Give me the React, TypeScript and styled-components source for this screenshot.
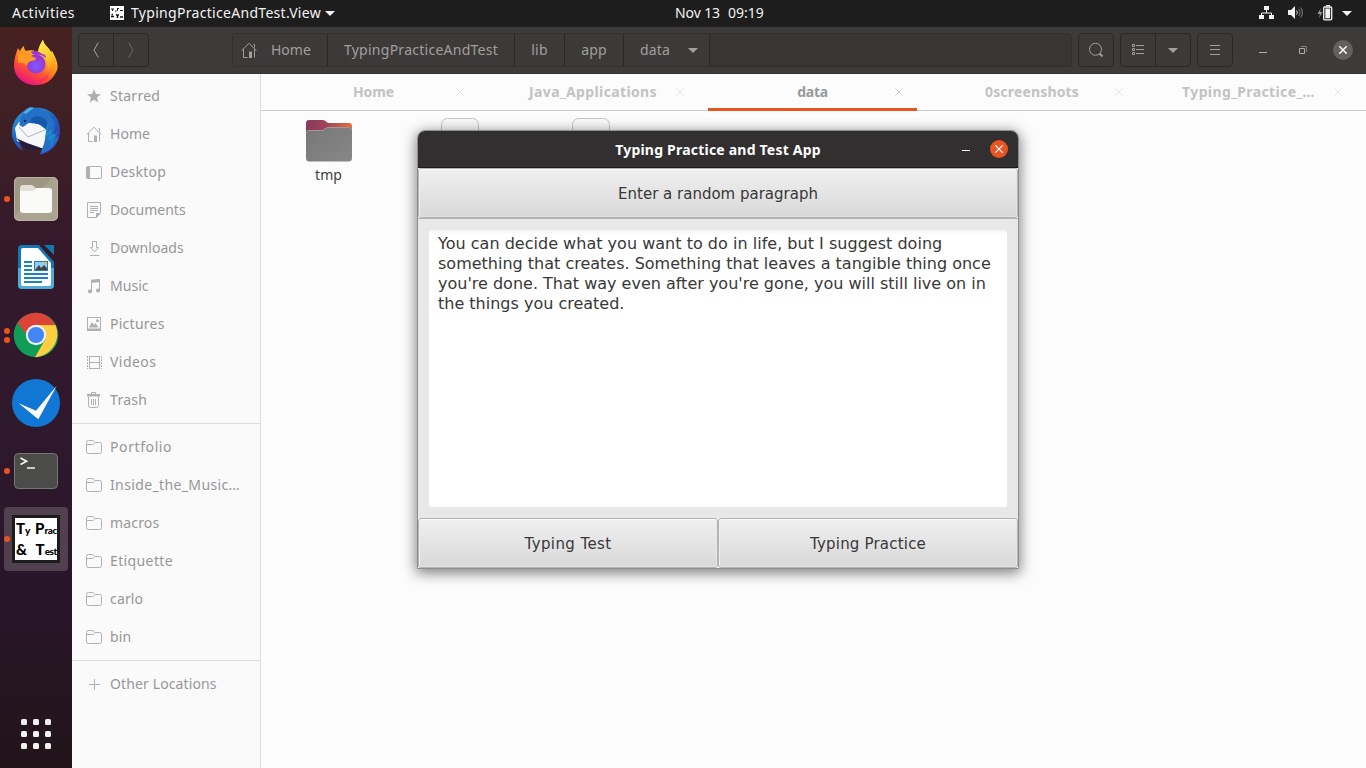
import React from 'react';
import styled, { createGlobalStyle, css } from 'styled-components';

const Global = createGlobalStyle`
  * { box-sizing: border-box; }
  html, body { margin: 0; padding: 0; overflow: hidden; }
  body { font-family: "Noto Sans", "Open Sans", sans-serif; font-size: 14px; line-height: 20px; }
  svg { display: block; flex: none; }
`;

/* ---------- desktop ---------- */

const Desktop = styled.div`
  position: relative;
  display: grid;
  grid-template: 27px 741px / 72px 1fr;
  width: 1366px;
  height: 768px;
  overflow: hidden;
`;

const Label = styled.span<{ $track?: number }>`
  letter-spacing: ${p => p.$track ?? 0}px;
  white-space: pre;
`;

/* ---------- top panel ---------- */

const TopPanel = styled.header`
  grid-column: 1 / 3;
  display: grid;
  grid-template-columns: 663px auto 1fr;
  align-items: center;
  padding: 0 14px 1px 12px;
  background: #1d1d1d;
  color: #f2f2f2;
`;

const PanelLeft = styled.div`
  display: flex;
  align-items: center;
`;

const AppMenu = styled.div`
  display: flex;
  align-items: center;
  margin-left: 35px;
  gap: 7px;

  svg:last-child { margin-left: -3px; }
`;

const Clock = styled.div`
  display: flex;
  gap: 8px;
`;

const PanelRight = styled.div`
  display: flex;
  align-items: center;
  justify-content: flex-end;
  gap: 13px;

  svg:last-child { margin-left: -4px; }
`;

/* ---------- dock ---------- */

const Dock = styled.nav`
  display: flex;
  flex-direction: column;
  gap: 4px;
  padding: 4px 4px 0;
  background: linear-gradient(#472120 0, #3d1f26 110px, #35192b 220px, #2e182c 400px, #29152a 560px, #211419 741px);
`;

const DockItem = styled.div<{ $active?: boolean; $lift?: number }>`
  position: relative;
  display: flex;
  align-items: center;
  justify-content: center;
  height: 64px;
  padding-bottom: ${p => p.$lift ?? 0}px;
  border-radius: 4px;
  background: ${p => (p.$active ? '#51404e' : 'transparent')};
`;

const RunningDots = styled.div`
  position: absolute;
  left: 0;
  top: 0;
  bottom: 0;
  display: flex;
  flex-direction: column;
  justify-content: center;
  gap: 3px;

  i {
    width: 6px;
    height: 6px;
    border-radius: 50%;
    background: #e95420;
  }
`;

const TypingTile = styled.div`
  display: flex;
  flex-direction: column;
  width: 48px;
  height: 48px;
  padding: 0 0 0 1px;
  border: 3px solid #1c1c1c;
  background: #fff;
  color: #000;
  font: 700 15px/21px Lato, sans-serif;

  span { display: flex; align-items: baseline; justify-content: space-between; height: 21px; white-space: pre; }
  small { font-size: 10px; line-height: 10px; letter-spacing: -0.4px; }
`;

const AppGrid = styled.div`
  display: grid;
  grid-template-columns: repeat(3, 6px);
  gap: 6px;
  margin: auto auto 19px;

  i {
    height: 6px;
    border-radius: 1.5px;
    background: #f0f0ee;
  }
`;

/* ---------- file manager ---------- */

const Files = styled.main`
  display: grid;
  grid-template: 47px 1fr / 189px 1fr;
  min-width: 0;
`;

const HeaderBar = styled.div`
  grid-column: 1 / 3;
  display: flex;
  align-items: center;
  padding: 0 13px 0 6px;
  background: #3d3b39;
  border-bottom: 1px solid #363432;
  color: #a09f9d;
`;

const buttonFrame = css`
  height: 34px;
  border: 1px solid #292826;
  border-radius: 4px;
  background: #3c3a38;
`;

const ButtonGroup = styled.div<{ $gap?: number }>`
  ${buttonFrame}
  display: flex;
  margin-left: ${p => p.$gap ?? 0}px;
`;

const HeaderButton = styled.button`
  display: flex;
  align-items: center;
  justify-content: center;
  width: 34px;
  padding: 0;
  border: 0;
  background: none;
  color: inherit;

  & + & {
    width: 35px;
    border-left: 1px solid #292826;
  }
`;

const PathBar = styled.div`
  ${buttonFrame}
  display: flex;
  width: 840px;
  margin: 0 0 0 83px;
  background: #383633;
  border-color: #32302e;
`;

const PathSegment = styled.div<{ $w: number }>`
  display: flex;
  align-items: center;
  justify-content: center;
  width: ${p => p.$w}px;
  border-right: 1px solid #292826;
  background: #3c3a38;
`;

const HomeSegment = styled(PathSegment)`
  justify-content: flex-start;
  padding-left: 8px;
  gap: 14px;
`;

const DataSegment = styled(PathSegment)`
  justify-content: flex-start;
  padding-left: 16px;
  gap: 18px;
`;

const WindowControls = styled.div`
  display: flex;
  align-items: center;
  margin-left: auto;
`;

const RoundClose = styled.div`
  display: flex;
  align-items: center;
  justify-content: center;
  width: 20px;
  height: 20px;
  margin-left: 26px;
  border-radius: 50%;
  background: #626160;
  color: #fff;
`;

const Sidebar = styled.aside`
  padding-top: 3px;
  background: #fafafa;
  border-right: 1px solid #dcdcdc;
  color: #979797;
`;

const Place = styled.div`
  display: flex;
  align-items: center;
  gap: 8px;
  height: 38px;
  padding-left: 14px;

  svg { color: #b0b0b0; }
`;

const Divider = styled.div`
  height: 1px;
  margin: 4px 0;
  background: #dcdcdc;
`;

const Content = styled.section`
  display: flex;
  flex-direction: column;
  min-width: 0;
  background: #fcfcfc;
`;

const TabStrip = styled.div`
  display: grid;
  grid-template-columns: repeat(5, 209px);
  column-gap: 10.5px;
  height: 37px;
  padding-left: 8px;
  border-bottom: 1px solid #cdcdcd;
`;

const Tab = styled.div<{ $active?: boolean }>`
  display: grid;
  grid-template-columns: 26px 1fr 26px;
  align-items: center;
  height: 37px;
  border-bottom: 3px solid ${p => (p.$active ? '#e95420' : 'transparent')};
  color: ${p => (p.$active ? '#999' : '#c2c2c2')};
  font-weight: 700;
  text-align: center;

  span { grid-column: 2; padding-top: 2px; }
  svg { margin: 2px 0 0 4px; color: ${p => (p.$active ? '#d2d2d2' : '#e6e6e6')}; }
  &:last-child span { padding-right: 6px; }
`;

const IconView = styled.div`
  display: flex;
  padding: 7px 0 0 2px;
`;

const FileItem = styled.div<{ $drop?: number }>`
  display: flex;
  flex-direction: column;
  align-items: center;
  width: 131px;
  padding-top: ${p => p.$drop ?? 0}px;
  gap: 2px;
  color: #3d3d3d;
`;

/* ---------- dialog window ---------- */

const DialogWindow = styled.div`
  position: absolute;
  left: 417px;
  top: 130px;
  width: 602px;
  height: 439px;
  display: flex;
  flex-direction: column;
  border: 1px solid #8e8e8e;
  border-radius: 8px 8px 0 0;
  background: #e8e8e8;
  box-shadow: 0 3px 14px 1px rgba(0, 0, 0, 0.5);
  overflow: hidden;
  color: #333;
`;

const TitleBar = styled.div`
  display: grid;
  grid-template-columns: 63px 1fr 63px;
  align-items: center;
  flex: none;
  height: 37px;
  border-bottom: 1px solid #1c1a1b;
  background: #322f30;
  color: #fff;
  font-weight: 700;
  text-align: center;

  > span { padding-top: 1px; }
`;

const TitleControls = styled.div`
  display: flex;
  align-items: center;
  padding-left: 6px;
  gap: 20px;
`;

const OrangeClose = styled.div`
  display: flex;
  align-items: center;
  justify-content: center;
  width: 18px;
  height: 18px;
  border-radius: 50%;
  background: #e95420;
  color: #fff;
`;

const FxButton = styled.button<{ $track?: number }>`
  flex: 1;
  height: 50px;
  padding: 1px 0 0;
  border: 1px solid #b3b3b3;
  border-radius: 3px;
  background: linear-gradient(#f0f0f0, #d8d8d8);
  box-shadow: inset 0 1px #fafafa, inset 1px 0 #f0f0f0, inset -1px 0 #e8e8e8, inset 0 -1px #e2e2e2;
  color: #383838;
  font: 15px "DejaVu Sans", sans-serif;
  letter-spacing: ${p => p.$track ?? 0}px;
`;

const ButtonRow = styled.div`
  display: flex;
  flex: none;
  height: 50px;
  background: #f6f6f6;
`;

const TextFrame = styled.div`
  flex: 1;
  padding: 11px 11px 11px;
  border-top: 1px solid #b3b3b3;
`;

const Paragraph = styled.div`
  height: 100%;
  padding: 4px 9px;
  border-radius: 2px;
  background: linear-gradient(#f4f4f4, #fff 5px);
  color: #383838;
  font: 16px/20px "DejaVu Sans", sans-serif;
`;

const TextLine = styled.div<{ $track: number }>`
  letter-spacing: ${p => p.$track}px;
  white-space: pre;
`;

/* ---------- symbolic icons ---------- */

const Icon = ({ children }: { children: React.ReactNode }) => (
  <svg width="16" height="16" viewBox="0 0 16 16" fill="none" stroke="currentColor">{children}</svg>
);

const HomeIcon = () => (
  <Icon>
    <path d="M.7 8.7 8 1.2l7.3 7.5M2.5 7v8.5h4M13.5 7v8.5M12.5 2.5h1v3" />
    <path d="M8 9.500h3V16H8z" fill="currentColor" stroke="none" />
  </Icon>
);
const StarIcon = () => (
  <Icon><path d="m8 1 1.900 4.900 5.100.300-4 3.300 1.400 5L8 11.700l-4.400 2.800 1.400-5-4-3.300 5.100-.300z" fill="currentColor" stroke="none" /></Icon>
);
const DesktopIcon = () => (
  <Icon><rect x=".5" y="2.5" width="15" height="12" rx="1.5" /><path d="M1 3h2.500v11H1z" fill="currentColor" /></Icon>
);
const DocumentIcon = () => (
  <Icon>
    <path d="M1.5 .5h13v10l-4 5h-9zM4 4.5h8M4 6.5h8M4 8.5h8M4 10.5h4" />
    <path d="M10 16v-5h5z" fill="currentColor" stroke="none" />
  </Icon>
);
const DownloadIcon = () => (
  <Icon><path d="M6.5 1.5h4v6h2L8.500 12l-4-4.500h2zM4 15.500h9.500" /></Icon>
);
const MusicIcon = () => (
  <Icon>
    <path d="M5.5 13V3l8-1.5v11" />
    <path d="M5 1.8 14 1v3L5 5z" fill="currentColor" stroke="none" />
    <circle cx="4" cy="13.3" r="2.1" fill="currentColor" stroke="none" />
    <circle cx="12" cy="12.6" r="2" fill="currentColor" stroke="none" />
  </Icon>
);
const PictureIcon = () => (
  <Icon>
    <rect x="1.5" y="1.5" width="13" height="13" />
    <path d="M1 12.5h14v2H1zM3 11.5 6 6l2 3 1.5-2 3 4.5z" fill="currentColor" stroke="none" />
    <circle cx="11.500" cy="4.700" r="1.500" fill="currentColor" stroke="none" />
  </Icon>
);
const VideoIcon = () => (
  <Icon>
    <path d="M3.5 2v13M13.5 2v13M3 2.5h11M3 8.500h11M3 14.500h11" />
    <path d="M1.500 2v13M15.500 2v13" strokeDasharray="2 1" />
  </Icon>
);
const TrashIcon = () => (
  <Icon>
    <path d="M2.5 5v8.5a2 2 0 0 0 2 2h6a2 2 0 0 0 2-2V5M5.5 7v6M7.5 7v6M9.5 7v6M5.5 2V.5h4V2" />
    <path d="M1 2h13v2.5H1z" fill="currentColor" stroke="none" />
  </Icon>
);
const FolderIcon = () => (
  <Icon>
    <path d="M.5 12.5v-9a2 2 0 0 1 2-2H6c2 0 2 2 3.500 2h4a2 2 0 0 1 2 2v7a2 2 0 0 1-2 2h-11a2 2 0 0 1-2-2zM.5 5.5h6c1.500 0 2-2 3-2" />
  </Icon>
);
const PlusIcon = () => <Icon><path d="M3 8.5h11M8.5 3v11" /></Icon>;
const SearchIcon = () => (
  <Icon><circle cx="7.5" cy="7.3" r="6" /><path d="m11.500 11.500 3 3" strokeWidth="2" /></Icon>
);
const ListIcon = () => (
  <Icon><path d="M2.5 2.5h2v2h-2zM2.5 6.5h2v2h-2zM2.5 10.5h2v2h-2zM6 3.5h8M6 7.5h8M6 11.5h8" /></Icon>
);
const MenuIcon = () => <Icon><path d="M3 3.500h10M3 7.500h10M3 12.500h10" /></Icon>;

const CloseIcon = ({ weight = 1 }: { weight?: number }) => (
  <svg width="8" height="8" viewBox="0 0 8 8" fill="none" stroke="currentColor" strokeWidth={weight}>
    <path d="m.3 .3 7.400 7.400M7.700 .3 .3 7.700" />
  </svg>
);
const DownArrow = () => (
  <svg width="10" height="5" viewBox="0 0 10 5"><path d="M0 0h10L5 5z" fill="currentColor" /></svg>
);
const ChevronIcon = ({ right }: { right?: boolean }) => (
  <svg width="6" height="16" viewBox="0 0 6 16" fill="none" stroke={right ? '#6d6b69' : '#aaa9a7'}>
    <path d={right ? 'M.7 .5 5 8 .7 15.5' : 'M5.3 .5 1 8l4.3 7.5'} />
  </svg>
);

/* ---------- panel icons ---------- */

const MiniTile = () => (
  <svg width="14" height="14" viewBox="0 0 14 14">
    <path d="M0 0h14v14H0z" fill="#fff" />
    <path d="M1 3h3M2.500 3v2M5 5h1.500M7 2.500h2M7.500 3v2M10 4.500h3" stroke="#222" />
    <path d="M1 10.500h3M1.500 8.500h1.500M6 9h3M7.500 9v3M10 11h3" stroke="#111" strokeWidth="1.500" />
  </svg>
);
const NetworkIcon = () => (
  <svg width="16" height="14" viewBox="0 0 16 14" fill="#f2f2f2">
    <path d="M5 0h5v4H5zM0 9h5v4H0zM10 9h5v4h-5z" />
    <path d="M7.5 4v3M2.5 10V7h10v3" fill="none" stroke="#f2f2f2" />
  </svg>
);
const VolumeIcon = () => (
  <svg width="16" height="14" viewBox="0 0 16 14" fill="none" stroke="#8a8a8a">
    <path d="M0 4h3l4-4v13L3 9H0z" fill="#f2f2f2" stroke="none" />
    <path d="M8.500 4.500c1 1 1 3 0 4" stroke="#f2f2f2" />
    <path d="M10.500 3c2 2 2 5 0 7M12.500 1.500c2.500 3 2.500 7 0 10" />
  </svg>
);
const BatteryIcon = () => (
  <svg width="16" height="16" viewBox="0 0 16 16">
    <path d="m4 3-3.500 6H3l-1 4 3.500-6H3z" fill="#9a9a9a" />
    <path d="M9 0h4v1.500H9z" fill="#f2f2f2" />
    <rect x="6.700" y="2" width="8" height="12.800" rx="1" fill="none" stroke="#f2f2f2" strokeWidth="1.300" />
    <path d="M8.300 3.500h4.800v9.800H8.300z" fill="#f2f2f2" />
  </svg>
);

/* ---------- dock artwork ---------- */

const Firefox = () => (
  <svg width="46" height="48" viewBox="0 0 46 48">
    <defs>
      <linearGradient id="fx" x1=".8" y1=".1" x2=".3" y2="1">
        <stop offset="0" stopColor="#ffe340" /><stop offset=".4" stopColor="#ff9a20" />
        <stop offset=".7" stopColor="#ff4a38" /><stop offset="1" stopColor="#e8108a" />
      </linearGradient>
      <linearGradient id="fy" x1="0" y1="0" x2=".3" y2="1">
        <stop offset="0" stopColor="#fff44f" /><stop offset=".6" stopColor="#ffc52c" /><stop offset="1" stopColor="#ff8a1c" />
      </linearGradient>
      <radialGradient id="fp" cx=".5" cy=".6"><stop offset="0" stopColor="#7a5cff" /><stop offset="1" stopColor="#9a35d4" /></radialGradient>
    </defs>
    <path d="M5 10c1 2 2 3 2 3 2-4 4-5 4-5 0 3 1 4 2 5 3-1 8-1 12 1 1-6 4-11 5-12 1 5 4 6 6 9 1 1 2 3 2 4l1-2c5 9 8 16 3 23-4 8-12 11-19 11C10 47 1 39 1 27c0-6 2-12 4-17z" fill="url(#fx)" />
    <path d="M25 14c1-6 4-11 5-12 1 5 4 6 6 9 1 1 2 3 2 4l1-2c5 10 6 20-4 26 2-8 0-19-10-25z" fill="url(#fy)" />
    <circle cx="23" cy="26" r="9.500" fill="url(#fp)" />
    <path d="M18 14c3-2 8-1 11 2 3 0 4 2 4 4-3-3-7-4-10-3-2 0-4-1-5-3z" fill="#9b36d8" />
    <path d="M5 16c4-3 7-2 10 1l8 3c0 2-2 3-5 3-2 1-4 2-4 5-2-3-6-4-9-3z" fill="#ff9a25" />
    <path d="M2 31c4 12 17 14 26 10 6-2 10-8 10-13 1 11-8 18-16 18C13 46 4 40 2 31z" fill="#f0206e" opacity=".4" />
  </svg>
);

const Thunderbird = () => (
  <svg width="50" height="50" viewBox="0 0 50 50">
    <defs>
      <linearGradient id="tb" x1=".2" y1="0" x2=".8" y2="1">
        <stop offset="0" stopColor="#2c9be0" /><stop offset=".45" stopColor="#1b62bd" /><stop offset="1" stopColor="#4032a8" />
      </linearGradient>
    </defs>
    <path d="M13 5C17 1 21 0 23 2c13-2 26 7 26 22 0 10-5 18-12 22l-8 3 7-9c-4 3-8 2-9-1L8 36l4 9C4 40 0 32 1 25 1 18 5 10 13 5z" fill="url(#tb)" />
    <path d="M8 16 4 22l2 13 30 9 2-18-10-8z" fill="#f5f7f9" />
    <path d="m8 21 9 10 19-8" fill="none" stroke="#aeb5bd" />
    <path d="M5 32l11 5 17 6-3 1-14-1z" fill="#241b3f" />
    <path d="M23 2C14 2 10 8 9 16c-1 2-1 4 3 5l7-5c7 1 12 3 17 8l-3 14-4 10c9-2 17-9 19-18l-4 3 3-8-5 5 2-12C40 8 33 2 23 2z" fill="#2370c6" />
    <path d="M19 16c1-5 6-7 11-5 6 2 8 8 7 15l-1-2c-4-5-10-7-17-8z" fill="#1557aa" />
    <path d="m37 18-2 12 5-6-2 10 5-6-3 11" stroke="#1c8fd4" fill="none" strokeWidth="1.500" />
    <path d="M12 7c4-5 8-6 11-5l-8 6z" fill="#48afe7" />
    <circle cx="14" cy="15" r="1.200" fill="#102a4e" />
  </svg>
);

const FilesApp = () => (
  <svg width="46" height="46" viewBox="0 0 46 46">
    <rect x="1" y="1" width="44" height="44" rx="5" fill="#aaa390" />
    <path d="M1 6a5 5 0 0 1 5-5h34L1 40z" fill="#9e9784" />
    <rect x="1.500" y="1.500" width="43" height="43" rx="4.500" fill="none" stroke="#b7b1a0" />
    <path d="M7 12a3 3 0 0 1 3-3h9l4 3h12v14H7z" fill="#e2dfd4" />
    <path d="M7 15h13l4-3h12a3 3 0 0 1 3 3v19a3 3 0 0 1-3 3H10a3 3 0 0 1-3-3z" fill="#fafaf8" />
  </svg>
);

const Writer = () => (
  <svg width="38" height="46" viewBox="0 0 38 46">
    <path d="M5 1h17l15 17v23a4 4 0 0 1-4 4H5a4 4 0 0 1-4-4V5a4 4 0 0 1 4-4z" fill="#1478b0" />
    <path d="M1 24h36v17a4 4 0 0 1-4 4H5a4 4 0 0 1-4-4z" fill="#51abd9" />
    <path d="M6 4h15l13 15v21a2 2 0 0 1-2 2H6a2 2 0 0 1-2-2V6a2 2 0 0 1 2-2z" fill="#fff" />
    <path d="M27 1h9a1 1 0 0 1 1 1v9z" fill="#1278ae" />
    <path d="M7 18h8M7 22h8M7 26h8M7 30h24M7 34h24M7 38h18" stroke="#1b84c0" strokeWidth="2" />
    <path d="M17 17h14v10H17z" fill="#1b84c0" /><path d="M18 18h12v8H18z" fill="#93cdf1" />
    <path d="m18 26 4-5 2 3 3-3 3 3v2z" fill="#424242" /><path d="M27 18h3v3z" fill="#f4b71e" />
  </svg>
);

const Chrome = () => (
  <svg width="46" height="46" viewBox="0 0 46 46">
    <circle cx="23" cy="23" r="22.300" fill="#109d58" />
    <path d="M23 13h19.300c5.700 12-1 30-20.300 32.300L32.500 27z" fill="#ffcd40" />
    <path d="M4.500 11C9 4 16 .7 23 .7c8 0 15 4.500 19.300 12.300H23c-5 0-9 4-10 9z" fill="#db4437" />
    <circle cx="23" cy="23" r="10.200" fill="#f1f1f1" />
    <circle cx="23" cy="23" r="8.100" fill="#4285f4" />
  </svg>
);

const Todo = () => (
  <svg width="48" height="48" viewBox="0 0 48 48">
    <circle cx="24" cy="24" r="24" fill="#1077d4" />
    <path d="M6.700 24.300 24 31.700l20.700-25-18.400 33.600z" fill="#fff" />
  </svg>
);

const Terminal = () => (
  <svg width="46" height="38" viewBox="0 0 46 38">
    <rect x="1.500" y="1.500" width="43" height="35" rx="4" fill="#4b4b4a" stroke="#767675" />
    <path d="m7.500 6 6 3.300-6 3.200M14 16h8" fill="none" stroke="#f5f5f5" strokeWidth="1.700" />
  </svg>
);

/* ---------- file icons ---------- */

const BigFolder = () => (
  <svg width="46" height="44" viewBox="0 0 46 44">
    <defs>
      <linearGradient id="bf"><stop offset="0" stopColor="#863a5e" /><stop offset=".45" stopColor="#a24457" /><stop offset="1" stopColor="#ec6a3b" /></linearGradient>
      <linearGradient id="bg" x2="1" y2="1"><stop offset="0" stopColor="#777" /><stop offset="1" stopColor="#878787" /></linearGradient>
    </defs>
    <path d="M0 4a3 3 0 0 1 3-3h14c3 0 3 3 6 3h20a3 3 0 0 1 3 3v20H0z" fill="url(#bf)" />
    <path d="M0 14a3 3 0 0 1 3-3h13c3 0 3-3 6-3h21a3 3 0 0 1 3 3v28a3.500 3.500 0 0 1-3.500 3.500h-39A3.500 3.500 0 0 1 0 39z" fill="url(#bg)" />
    <path d="M.5 14A3 3 0 0 1 3 11.500h13c3 0 3-3 6-3h21a3 3 0 0 1 2.500 2.500" fill="none" stroke="#9a9a9a" />
  </svg>
);
const PageOutline = () => (
  <svg width="38" height="48" viewBox="0 0 38 48">
    <rect x=".5" y=".5" width="37" height="47" rx="6" fill="#fafafa" stroke="#c6c6c6" />
  </svg>
);

/* ---------- data ---------- */

const places: [React.FC, string, number][] = [
  [StarIcon, 'Starred', 0.26], [HomeIcon, 'Home', 0.06], [DesktopIcon, 'Desktop', 0.25],
  [DocumentIcon, 'Documents', 0.02], [DownloadIcon, 'Downloads', 0.04], [MusicIcon, 'Music', 0.04],
  [PictureIcon, 'Pictures', 0.26], [VideoIcon, 'Videos', 0.46], [TrashIcon, 'Trash', 0.3],
];
const bookmarks: [string, number][] = [
  ['Portfolio', 0.6], ['Inside_the_Music…', 0.37], ['macros', 0.16],
  ['Etiquette', 0.38], ['carlo', 0.16], ['bin', 0.1],
];
const tabs: [string, number][] = [
  ['Home', -0.12], ['Java_Applications', 0.37], ['data', -0.3], ['0screenshots', 0.16], ['Typing_Practice_…', 0.38],
];
const paragraph: [string, number][] = [
  ['You can decide what you want to do in life, but I suggest doing', 0.02],
  ['something that creates. Something that leaves a tangible thing once', 0],
  ["you're done. That way even after you're gone, you will still live on in", 0],
  ['the things you created.', 0],
];

export default function App() {
  return (
    <>
      <Global />
      <Desktop>
        <TopPanel>
          <PanelLeft>
            <Label $track={0.47}>Activities</Label>
            <AppMenu>
              <MiniTile />
              <Label $track={0.3}>TypingPracticeAndTest.View</Label>
              <DownArrow />
            </AppMenu>
          </PanelLeft>
          <Clock><Label $track={-0.1}>Nov 13</Label><Label>09:19</Label></Clock>
          <PanelRight>
            <NetworkIcon />
            <VolumeIcon />
            <BatteryIcon />
            <DownArrow />
          </PanelRight>
        </TopPanel>

        <Dock>
          <DockItem $lift={3}><Firefox /></DockItem>
          <DockItem><Thunderbird /></DockItem>
          <DockItem><RunningDots><i /></RunningDots><FilesApp /></DockItem>
          <DockItem><Writer /></DockItem>
          <DockItem><RunningDots><i /><i /></RunningDots><Chrome /></DockItem>
          <DockItem><Todo /></DockItem>
          <DockItem><RunningDots><i /></RunningDots><Terminal /></DockItem>
          <DockItem $active>
            <RunningDots><i /></RunningDots>
            <TypingTile>
              <span><b>T<small>y</small></b><b>P<small>rac</small></b></span>
              <span><b>&amp;</b><b>T<small>est</small></b></span>
            </TypingTile>
          </DockItem>
          <AppGrid>{Array.from({ length: 9 }, (_, i) => <i key={i} />)}</AppGrid>
        </Dock>

        <Files>
          <HeaderBar>
            <ButtonGroup>
              <HeaderButton><ChevronIcon /></HeaderButton>
              <HeaderButton><ChevronIcon right /></HeaderButton>
            </ButtonGroup>
            <PathBar>
              <HomeSegment $w={95}><HomeIcon /><Label>Home</Label></HomeSegment>
              <PathSegment $w={187}><Label $track={0.26}>TypingPracticeAndTest</Label></PathSegment>
              <PathSegment $w={50}><Label $track={0.22}>lib</Label></PathSegment>
              <PathSegment $w={59}><Label $track={0.14}>app</Label></PathSegment>
              <DataSegment $w={86}><Label $track={0.16}>data</Label><DownArrow /></DataSegment>
            </PathBar>
            <ButtonGroup $gap={6}><HeaderButton><SearchIcon /></HeaderButton></ButtonGroup>
            <ButtonGroup $gap={6}>
              <HeaderButton><ListIcon /></HeaderButton>
              <HeaderButton><DownArrow /></HeaderButton>
            </ButtonGroup>
            <ButtonGroup $gap={6}><HeaderButton><MenuIcon /></HeaderButton></ButtonGroup>
            <WindowControls>
              <svg width="48" height="16" viewBox="0 0 48 16" fill="none" stroke="#b0afad">
                <path d="M0 10.500h8M40.500 6.500h5v5h-5z" /><path d="M42 4.500h5.500V10" stroke="#83817f" />
              </svg>
              <RoundClose><CloseIcon weight={1.5} /></RoundClose>
            </WindowControls>
          </HeaderBar>

          <Sidebar>
            {places.map(([Glyph, name, track]) => (
              <Place key={name}><Glyph /><Label $track={track}>{name}</Label></Place>
            ))}
            <Divider />
            {bookmarks.map(([name, track]) => (
              <Place key={name}><FolderIcon /><Label $track={track}>{name}</Label></Place>
            ))}
            <Divider />
            <Place><PlusIcon /><Label $track={0.12}>Other Locations</Label></Place>
          </Sidebar>

          <Content>
            <TabStrip>
              {tabs.map(([name, track]) => (
                <Tab key={name} $active={name === 'data'}>
                  <Label $track={track}>{name}</Label>
                  <CloseIcon />
                </Tab>
              ))}
            </TabStrip>
            <IconView>
              <FileItem $drop={1}><BigFolder /><Label>tmp</Label></FileItem>
              <FileItem><PageOutline /></FileItem>
              <FileItem><PageOutline /></FileItem>
            </IconView>
          </Content>
        </Files>

        <DialogWindow>
          <TitleBar>
            <span />
            <Label $track={0.21}>Typing Practice and Test App</Label>
            <TitleControls>
              <svg width="9" height="8" viewBox="0 0 9 8"><path d="M1 5.500h8" stroke="#fff" /></svg>
              <OrangeClose><CloseIcon weight={1.2} /></OrangeClose>
            </TitleControls>
          </TitleBar>
          <ButtonRow><FxButton>Enter a random paragraph</FxButton></ButtonRow>
          <TextFrame>
            <Paragraph>
              {paragraph.map(([line, track]) => <TextLine key={line} $track={track}>{line}</TextLine>)}
            </Paragraph>
          </TextFrame>
          <ButtonRow>
            <FxButton $track={0.4}>Typing Test</FxButton>
            <FxButton $track={0.2}>Typing Practice</FxButton>
          </ButtonRow>
        </DialogWindow>
      </Desktop>
    </>
  );
}
